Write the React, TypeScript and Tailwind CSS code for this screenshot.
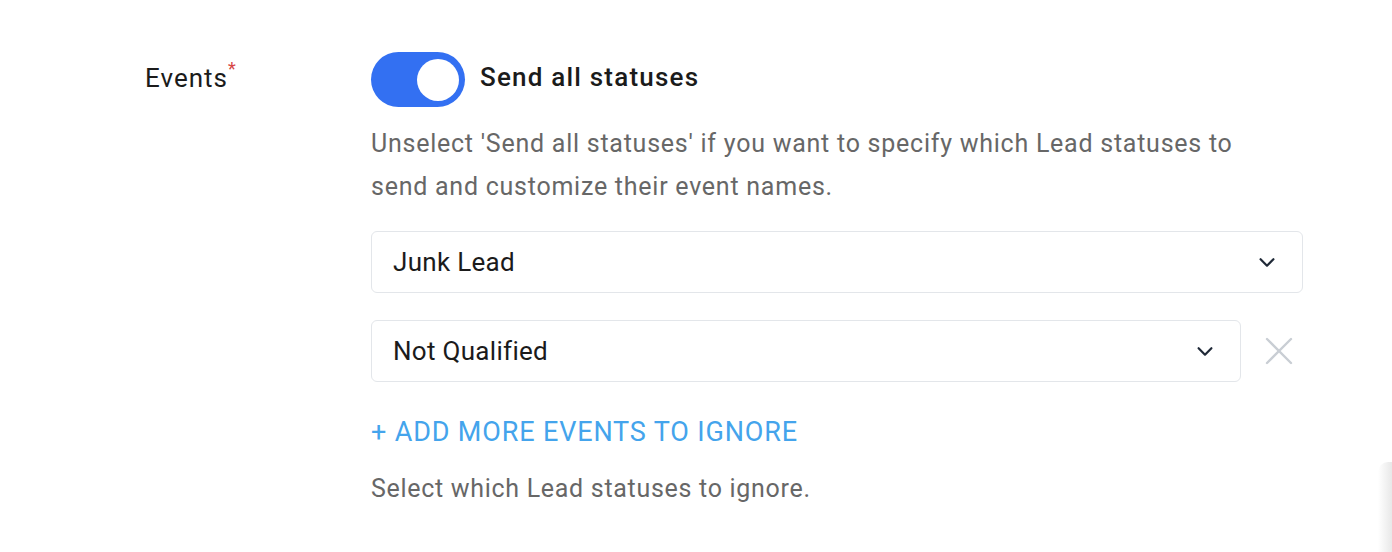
import React, { useState } from 'react';

const Chevron: React.FC = () => (
  <svg width="22" height="22" viewBox="0 0 24 24" fill="none" stroke="#1f2937" strokeWidth="2.4" strokeLinecap="round" strokeLinejoin="round">
    <path d="M5 9l7 7 7-7" />
  </svg>
);

const SelectBox: React.FC<{ value: string; className?: string }> = ({ value, className }) => (
  <div className={`h-[62px] flex items-center justify-between pl-[21px] pr-[24px] border border-[#e3e6ea] rounded-[6px] bg-white ${className ?? ''}`}>
    <span className="text-[26px] tracking-[0.3px] text-[#1b1b1b]">{value}</span>
    <Chevron />
  </div>
);

export default function App() {
  const [sendAll, setSendAll] = useState(true);

  return (
    <div className="w-[1392px] h-[552px] bg-white overflow-hidden relative" style={{ fontFamily: 'Roboto, "Noto Sans", sans-serif' }}>
      <div className="flex pt-[52px] pl-[145px]">
        <div className="w-[226px] pt-[7px]">
          <span className="text-[26px] tracking-[1px] text-[#1b1b1b]">Events</span>
          <span className="text-[#d64545] text-[18px] align-top relative -top-[4px]">*</span>
        </div>
        <div className="w-[932px]">
          <div className="flex items-center gap-[15px]">
            <button
              onClick={() => setSendAll(!sendAll)}
              className={`w-[94px] h-[55px] rounded-full flex items-center px-[6px] ${sendAll ? 'bg-[#3370f2] justify-end' : 'bg-gray-300 justify-start'}`}
            >
              <span className="w-[42px] h-[42px] rounded-full bg-white block" />
            </button>
            <span className="text-[26px] font-medium tracking-[1.2px] text-[#1b1b1b] -mt-[4px]">Send all statuses</span>
          </div>
          <p className="mt-[15px] max-w-[880px] text-[25px] leading-[43px] tracking-[0.75px] text-[#676767]">
            Unselect 'Send all statuses' if you want to specify which Lead statuses to send and customize their event names.
          </p>
          <SelectBox value="Junk Lead" className="mt-[23px] w-[932px]" />
          <div className="mt-[27px] flex items-center">
            <SelectBox value="Not Qualified" className="w-[870px]" />
            <svg className="ml-[24px]" width="28" height="28" viewBox="0 0 28 28" fill="none" stroke="#c9ced4" strokeWidth="2.4" strokeLinecap="round">
              <path d="M2 2l24 24M26 2L2 26" />
            </svg>
          </div>
          <div className="mt-[34px] text-[27px] leading-[32px] text-[#44a4ec] tracking-[0.85px]">+ ADD MORE EVENTS TO IGNORE</div>
          <p className="mt-[26px] text-[25px] leading-[29px] tracking-[0.7px] text-[#676767]">Select which Lead statuses to ignore.</p>
        </div>
      </div>
      <div className="absolute right-0 bottom-0 w-[14px] h-[90px] bg-gradient-to-l from-[#e8e8e8] to-transparent rounded-tl-[10px]" />
    </div>
  );
}
